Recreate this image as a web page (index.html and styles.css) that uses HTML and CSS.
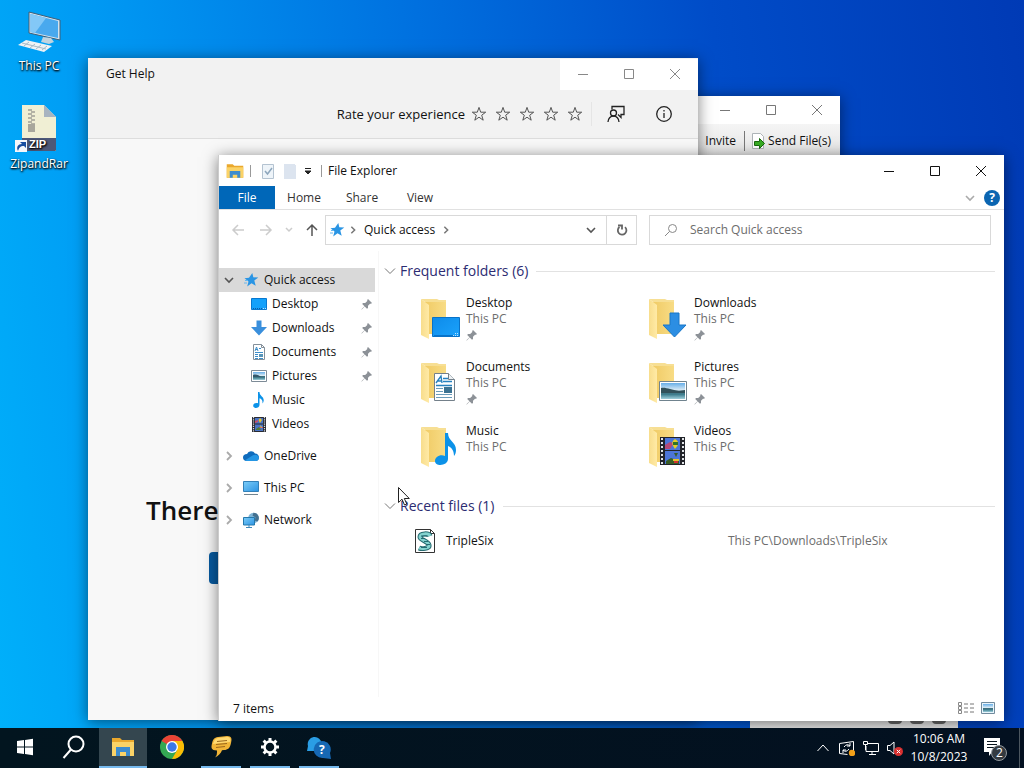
FILE: index.html
```
<!DOCTYPE html>
<html lang="en">
<head>
    <meta charset="UTF-8">
    <meta name="viewport" content="width=device-width, initial-scale=1.0">
    <title>File Explorer</title>
    <link rel="stylesheet" href="styles.css">
</head>
<body>
    <!-- shared icons -->
    <svg class="sprite" aria-hidden="true">
        <defs>
            <linearGradient id="gFolder" x1="0" y1="0" x2="1" y2="0">
                <stop offset="0" stop-color="#f0cb66"/><stop offset="1" stop-color="#f8dc85"/>
            </linearGradient>
            <linearGradient id="gFlap" x1="0" y1="0" x2="1" y2="0">
                <stop offset="0" stop-color="#f8dd8c"/><stop offset="1" stop-color="#ffeaa6"/>
            </linearGradient>
            <linearGradient id="gBlue" x1="0" y1="0" x2="1" y2="1">
                <stop offset="0" stop-color="#0d8bea"/><stop offset="1" stop-color="#1ba2fb"/>
            </linearGradient>
            <linearGradient id="gScreen" x1="0" y1="0" x2="1" y2="1">
                <stop offset="0" stop-color="#7ccdf8"/><stop offset="1" stop-color="#2c93e3"/>
            </linearGradient>
            <linearGradient id="gSky" x1="0" y1="0" x2="0" y2="1">
                <stop offset="0" stop-color="#66aee8"/><stop offset="0.45" stop-color="#dcecf5"/>
                <stop offset="0.5" stop-color="#3f6a78"/><stop offset="0.72" stop-color="#3f7f8f"/><stop offset="1" stop-color="#9fd0dc"/>
            </linearGradient>
        </defs>
        <symbol id="min" viewBox="0 0 12 12"><path d="M1 6.5h10" stroke="currentColor"/></symbol>
        <symbol id="max" viewBox="0 0 12 12"><path d="M1.5 1.5h9v9h-9z" fill="none" stroke="currentColor"/></symbol>
        <symbol id="close" viewBox="0 0 12 12"><path d="M1 1l10 10M11 1L1 11" stroke="currentColor"/></symbol>
        <symbol id="down" viewBox="0 0 12 12"><path d="M2 4l4 4 4-4" fill="none" stroke="currentColor" stroke-width="1.6"/></symbol>
        <symbol id="thin-down" viewBox="0 0 12 12"><path d="M1 3.500l5 5 5-5" fill="none" stroke="currentColor"/></symbol>
        <symbol id="right" viewBox="0 0 12 12"><path d="M4 2l4 4-4 4" fill="none" stroke="currentColor" stroke-width="1.8"/></symbol>
        <symbol id="star" viewBox="0 0 16 16"><path d="M8 1.4l1.7 4.8h5L10.7 9.200l1.500 5L8 11.200l-4.200 3 1.500-5L1.300 6.200h5z" fill="none" stroke="#555"/></symbol>
        <symbol id="quick" viewBox="0 0 16 16"><path d="M9.300 1l1 4.300 5 .2-4 3 1.400 5.300-4.200-2.600-4.300 3.300 1.300-5L1.500 6.300l4.500-.6z" fill="#2a95e4"/><path d="M2 8.500h3M1 11h3" stroke="#67b8f0"/></symbol>
        <symbol id="pin" viewBox="0 0 12 12"><path d="M7 1l4 4-1 .8-1-.1-2 2.100v2.200l-1 .8-2.300-2.300L.8 11.600.4 11.200 3.500 8.300 1.200 6l.8-1h2.200l2.100-2-.1-1z" fill="#8c9197"/></symbol>
        <symbol id="desktop" viewBox="0 0 16 16"><path d="M.5 2.500h15v11H.5z" fill="#13a1fb" stroke="#0878d0"/><path d="M2 12.500h9" stroke="#0a5ca8" stroke-dasharray="1 1"/><path d="M12 12.500h3" stroke="#bfe5ff" stroke-dasharray="1 1"/></symbol>
        <symbol id="download" viewBox="0 0 16 16"><path d="M5.500.5h5V7H16l-8 8.500L0 7h5.500z" fill="#3a8fdc"/></symbol>
        <symbol id="document" viewBox="0 0 16 16"><path d="M2.500.5h8l3 3v12h-11z" fill="#fff" stroke="#84909a"/><path d="M10.500.5v3h3" fill="none" stroke="#84909a"/><path d="M4 7l1.500-4L7 7M4.500 5.500h2M8 4.500h2M4 8.500h8M4 10.500h3M4 12.500h3M8 14.500h4M4 14.500h3" stroke="#3c8dc9" fill="none"/><path d="M8 10h4v3H8z" fill="#5794b8"/></symbol>
        <symbol id="picture" viewBox="0 0 16 16"><path d="M.5 2.500h15v11H.5z" fill="#fff" stroke="#7d8b97"/><path d="M2 4h12v8H2z" fill="url(#gSky)"/><path d="M2 7c3-1 6 0 8 2H2z" fill="#31576b"/></symbol>
        <symbol id="music" viewBox="0 0 16 16"><path d="M7 0h1.500c0 4 4.500 4.500 4.200 8.500-.1 1.500-.8 2.500-1.400 3 .7-2.500-.5-4.500-2.800-5.300V13c0 3.500-6.500 4-6.300.7C2.300 11.500 5 10.600 7 11.300z" fill="#0c92e8"/></symbol>
        <symbol id="video" viewBox="0 0 16 16"><path d="M1 1h14v15H1z" fill="#292b32"/><path d="M2.500 1v15M13.500 1v15" stroke="#d9dce0" stroke-width="1.200" stroke-dasharray="1.200 1"/><path d="M4 2h8v5.500H4zM4 8.500h8V15H4z" fill="#4974c5"/><path d="M9 2l2 2-2 3-1.500-3z" fill="#e4c332"/><path d="M4 5l3-1v2l-3 1zM8 11h4v1H8z" fill="#c84e68"/><path d="M5 13l3-2 2 3H5z" fill="#507c35"/><path d="M9 9l2 2-1 1z" fill="#f0d848"/></symbol>
        <symbol id="cloud" viewBox="0 0 16 16"><path d="M4 6a4.500 4.500 0 0 1 8-.5C14.500 5.500 16 7.500 16 9.500S14.500 13 13 13H3.500C1.500 13 0 11.500 0 9.500S1.500 6 4 6z" fill="#0f6cbd"/><path d="M2 12.300l8-5a4 4 0 0 1 6 2.500c0 2-1.500 3.200-3 3.200H3.500z" fill="#2596e4"/></symbol>
        <symbol id="pc" viewBox="0 0 16 16"><path d="M.5 1.500h15v10H.5z" fill="url(#gScreen)" stroke="#3280b8"/><path d="M1 14.500h14" stroke="#718490"/></symbol>
        <symbol id="network" viewBox="0 0 16 16"><circle cx="10.500" cy="6" r="5.300" fill="#7fb4d6"/><path d="M10.500.7a5.300 5.300 0 0 1 4 8.800l-3-1 1-3-3-2z" fill="#44708f"/><path d="M.5 5.500h11v7.500H.5z" fill="url(#gScreen)" stroke="#2478ac"/><path d="M6 13v2M3 15.500h6" stroke="#3f88b8"/></symbol>
        <symbol id="folder" viewBox="0 0 48 48"><path d="M7 5h21v34H7z" fill="url(#gFolder)"/><path d="M3 4l8 6v34l-8-4z" fill="url(#gFlap)"/><path d="M3 4h16l2 1h7v2H7z" fill="#f7df94"/><path d="M11 39h6v3l-6 1z" fill="#fff"/></symbol>
        <symbol id="explorer" viewBox="0 0 24 24"><path d="M1 3h8l2 2h12v16H1z" fill="#eaa82d"/><path d="M1 7h22v14H1z" fill="#fbd367"/><path d="M5 12h14v9h-4v-4H9v4H5z" fill="#3d8ccf"/></symbol>
    </svg>

    <main class="desktop">
        <div class="shortcuts">
            <a class="shortcut" href="#">
                <svg viewBox="0 0 48 44"><path d="M14 2l31 8v20l-31-7z" fill="#d4e3ee"/><path d="M15.500 4L43 11v17l-27.500-6z" fill="#49a9ee"/><path d="M15.500 4L31 8 20 23l-4.500-1z" fill="#83c8f7"/><path d="M14 2v21l31 7V10z" fill="none" stroke="#3e5e78"/><path d="M28 27l8 1 3 4-5 2-8-2z" fill="#c2d4df"/><path d="M11 30l26 6-8 6L3 35z" fill="#eef2f5"/><path d="M7 33l24 6M14 32l-5 4M20 34l-5 4M26 35l-5 4M32 36l-5 4" stroke="#a6bac7" fill="none"/></svg>
                <span>This PC</span>
            </a>
            <a class="shortcut" href="#">
                <svg viewBox="0 0 48 48"><path d="M7 1h22l12 12v34H7z" fill="#f0efd4"/><path d="M29 1l12 12H29z" fill="#a8b4c0"/><path d="M15 5v16M18 7v16" stroke="#b4b3a6" stroke-width="4" stroke-dasharray="2 2"/><path d="M13 20h7v8h-7z" fill="#a8a79c"/><path d="M7 34h34v12q0 1-1 1H7z" fill="#4d5878"/><text x="14" y="44" class="zip-text">ZIP</text><path d="M0 36h12v12H0z" fill="#f5f7fb"/><path d="M3 47c-2-4 0-7 4-7l-2-2h6v6l-2-2c-4 0-5 2-6 5z" fill="#174da0"/></svg>
                <span>ZipandRar</span>
            </a>
        </div>

        <section class="window chat-window">
            <div class="caption-buttons">
                <button aria-label="Minimize"><svg><use href="#min"/></svg></button>
                <button aria-label="Maximize"><svg><use href="#max"/></svg></button>
                <button aria-label="Close"><svg><use href="#close"/></svg></button>
            </div>
            <div class="chat-tools">
                <button>Invite</button>
                <button class="send"><svg viewBox="0 0 16 16"><path d="M2.500.5h8l3 3v12h-11z" fill="#fff" stroke="#adb3b7"/><path d="M4.500 8.500h5v-3l5 5-5 5v-3h-5z" fill="#38ac24" stroke="#17680d"/></svg>Send File(s)</button>
            </div>
        </section>
        <div class="chat-status"><i></i><i></i><i></i></div>

        <section class="window help-window">
            <header class="help-head">
                <div class="help-title">
                    <span>Get Help</span>
                    <div class="caption-buttons">
                        <button aria-label="Minimize"><svg><use href="#min"/></svg></button>
                        <button aria-label="Maximize"><svg><use href="#max"/></svg></button>
                        <button aria-label="Close"><svg><use href="#close"/></svg></button>
                    </div>
                </div>
                <div class="help-rate">
                    <span>Rate your experience</span>
                    <div class="stars">
                        <button aria-label="1 star"><svg><use href="#star"/></svg></button>
                        <button aria-label="2 stars"><svg><use href="#star"/></svg></button>
                        <button aria-label="3 stars"><svg><use href="#star"/></svg></button>
                        <button aria-label="4 stars"><svg><use href="#star"/></svg></button>
                        <button aria-label="5 stars"><svg><use href="#star"/></svg></button>
                    </div>
                    <button class="help-btn" aria-label="Feedback"><svg viewBox="0 0 18 18"><path d="M5 4.500v-3h12v8h-3v3l-3-3" /><circle cx="6.500" cy="8" r="3"/><path d="M1 17c0-3.500 2.500-6 5.500-6s5.500 2.500 5.500 6"/></svg></button>
                    <button class="help-btn" aria-label="About"><svg viewBox="0 0 18 18"><circle cx="9" cy="9" r="7.300"/><path d="M9 8v5M9 5v1.500"/></svg></button>
                </div>
            </header>
            <div class="help-body">
                <h1>There</h1>
                <button class="help-action" aria-label="Retry"></button>
            </div>
        </section>

        <section class="window explorer">
            <header class="titlebar">
                <svg class="app-icon"><use href="#explorer"/></svg>
                <i class="bar"></i>
                <button class="quick-btn" aria-label="Properties"><svg viewBox="0 0 16 16"><path d="M2.500 1.500h11v14h-11z" fill="#eef4f9" stroke="#b4c3d1"/><path d="M5 8l2.500 3L12 5" fill="none" stroke="#8da6bc" stroke-width="1.500"/></svg></button>
                <button class="quick-btn" aria-label="New folder"><svg viewBox="0 0 16 16"><path d="M2 1h11v1h1v14H2z" fill="#dce4ef"/></svg></button>
                <button class="customize" aria-label="Customize toolbar"><svg viewBox="0 0 8 8"><path d="M1 1.500h6M1 4l3 3 3-3z" fill="#222" stroke="#222"/></svg></button>
                <i class="bar"></i>
                <span class="window-name">File Explorer</span>
                <div class="caption-buttons">
                    <button aria-label="Minimize"><svg><use href="#min"/></svg></button>
                    <button aria-label="Maximize"><svg><use href="#max"/></svg></button>
                    <button aria-label="Close"><svg><use href="#close"/></svg></button>
                </div>
            </header>
            <nav class="ribbon">
                <button class="file">File</button>
                <button>Home</button>
                <button>Share</button>
                <button>View</button>
                <div class="ribbon-end">
                    <button aria-label="Expand ribbon"><svg><use href="#down"/></svg></button>
                    <button class="question" aria-label="Help">?</button>
                </div>
            </nav>
            <div class="address-row">
                <div class="history">
                    <button aria-label="Back"><svg viewBox="0 0 14 14"><path d="M13 7H2M7 2L2 7l5 5"/></svg></button>
                    <button aria-label="Forward"><svg viewBox="0 0 14 14"><path d="M1 7h11M7 2l5 5-5 5"/></svg></button>
                    <button class="recent" aria-label="Recent locations"><svg viewBox="0 0 8 8"><path d="M1 2l3 3 3-3"/></svg></button>
                    <button class="up" aria-label="Up"><svg viewBox="0 0 14 14"><path d="M7 13V2M2 7l5-5 5 5"/></svg></button>
                </div>
                <div class="address">
                    <svg class="i16"><use href="#quick"/></svg>
                    <svg class="sep"><use href="#right"/></svg>
                    <a href="#">Quick access</a>
                    <svg class="sep"><use href="#right"/></svg>
                    <button class="drop" aria-label="Previous locations"><svg><use href="#down"/></svg></button>
                    <button class="refresh" aria-label="Refresh"><svg viewBox="0 0 12 12"><path d="M3.500 3A4.300 4.300 0 1 0 9 3.200" fill="none" stroke="#666" stroke-width="1.800"/><path d="M2 1.500h4v4" fill="none" stroke="#666" stroke-width="1.800"/></svg></button>
                </div>
                <div class="search">
                    <svg viewBox="0 0 14 14"><circle cx="8.500" cy="5.500" r="4" fill="none" stroke="#888"/><path d="M5.500 8.500L1 13" stroke="#888"/></svg>
                    <input type="text" aria-label="Search" placeholder="Search Quick access">
                </div>
            </div>
            <div class="explorer-body">
                <ul class="tree">
                    <li class="selected"><svg class="arrow"><use href="#down"/></svg><a href="#"><svg class="i16"><use href="#quick"/></svg>Quick access</a></li>
                    <li class="child"><a href="#"><svg class="i16"><use href="#desktop"/></svg>Desktop</a><svg class="pin"><use href="#pin"/></svg></li>
                    <li class="child"><a href="#"><svg class="i16"><use href="#download"/></svg>Downloads</a><svg class="pin"><use href="#pin"/></svg></li>
                    <li class="child"><a href="#"><svg class="i16"><use href="#document"/></svg>Documents</a><svg class="pin"><use href="#pin"/></svg></li>
                    <li class="child"><a href="#"><svg class="i16"><use href="#picture"/></svg>Pictures</a><svg class="pin"><use href="#pin"/></svg></li>
                    <li class="child"><a href="#"><svg class="i16"><use href="#music"/></svg>Music</a></li>
                    <li class="child"><a href="#"><svg class="i16"><use href="#video"/></svg>Videos</a></li>
                    <li class="root"><svg class="arrow"><use href="#right"/></svg><a href="#"><svg class="i16"><use href="#cloud"/></svg>OneDrive</a></li>
                    <li class="root"><svg class="arrow"><use href="#right"/></svg><a href="#"><svg class="i16"><use href="#pc"/></svg>This PC</a></li>
                    <li class="root"><svg class="arrow"><use href="#right"/></svg><a href="#"><svg class="i16"><use href="#network"/></svg>Network</a></li>
                </ul>
                <div class="files">
                    <h2><svg><use href="#thin-down"/></svg>Frequent folders (6)</h2>
                    <div class="tiles">
                        <a class="tile" href="#">
                            <svg viewBox="0 0 48 48"><use href="#folder"/><path d="M14.500 22.500h27v19h-27z" fill="url(#gBlue)" stroke="#0872c8"/><path d="M16 40.500h20" stroke="#0872c8"/><path d="M35 40.500h6M37 38.500h4" stroke="#bce2ff" stroke-dasharray="1 1"/></svg>
                            <span><b>Desktop</b>This PC<svg class="pin"><use href="#pin"/></svg></span>
                        </a>
                        <a class="tile" href="#">
                            <svg viewBox="0 0 48 48"><use href="#folder"/><path d="M24 18h9v12h7L28.500 42 17 30h7z" fill="#2c8ee3" stroke="#1976c8"/></svg>
                            <span><b>Downloads</b>This PC<svg class="pin"><use href="#pin"/></svg></span>
                        </a>
                        <a class="tile" href="#">
                            <svg viewBox="0 0 48 48"><use href="#folder"/><path d="M16.500 14.500h14l6 6v21h-20z" fill="#fff" stroke="#74808a"/><path d="M30.500 14.500v6h6" fill="#edf1f4" stroke="#74808a"/><path d="M18 24l5-7 1 7M20 22h4M25 19.500h5M25 22.500h9M18 26.500h16" fill="none" stroke="#2781be" stroke-width="1.400"/><path d="M18 29.500h7M18 32.500h7M18 35.500h16M18 38.500h16" stroke="#6b9cbb"/><path d="M26 28h8v6h-8z" fill="#3b7292"/></svg>
                            <span><b>Documents</b>This PC<svg class="pin"><use href="#pin"/></svg></span>
                        </a>
                        <a class="tile" href="#">
                            <svg viewBox="0 0 48 48"><use href="#folder"/><path d="M13.500 22.500h27v19h-27z" fill="#fff" stroke="#70838e"/><path d="M15 24h24v16H15z" fill="url(#gSky)"/><path d="M15 29c5-1 10 2 18 3l6-1v3H15z" fill="#31515a"/></svg>
                            <span><b>Pictures</b>This PC<svg class="pin"><use href="#pin"/></svg></span>
                        </a>
                        <a class="tile" href="#">
                            <svg viewBox="0 0 48 48"><use href="#folder"/><path d="M27 10h3c0 8 8 9 8 17 0 3-1 5-2 6 0-6-3-9-6-10v13c0 7-13 8-13 2 0-4 5-7 10-5z" fill="#0c92e8"/></svg>
                            <span><b>Music</b>This PC</span>
                        </a>
                        <a class="tile" href="#">
                            <svg viewBox="0 0 48 48"><use href="#folder"/><path d="M14 14h25v28H14z" fill="#22242a"/><path d="M16 15v27M37 15v27" stroke="#e2e5e8" stroke-width="2" stroke-dasharray="2 2"/><path d="M19 15h15v12H19zM19 28h15v13H19z" fill="#4c75d8"/><path d="M19 22l5-3 4 1-4 6h-5z" fill="#b54978"/><path d="M29 16c6 3 2 8 0 10-2-3-5-7 0-10z" fill="#e4ce29"/><path d="M27 19h5v3h-5z" fill="#2e7427"/><path d="M28 30h4l-2 4zM20 38l5-3 8 3v3H20z" fill="#385c25"/><path d="M27 36h6v2h-6z" fill="#e1c02d"/><path d="M28 38h4v2h-4z" fill="#d23131"/></svg>
                            <span><b>Videos</b>This PC</span>
                        </a>
                    </div>
                    <h2><svg><use href="#thin-down"/></svg>Recent files (1)</h2>
                    <a class="recent-file" href="#">
                        <svg viewBox="0 0 22 24"><path d="M1.500.5h15l4 4v19h-19z" fill="#fff" stroke="#333"/><path d="M16.500.5v4h4" fill="none" stroke="#333"/><path d="M16 7c-1-3-10-3-10 1 0 3 8 4 9 8 1 4-8 4-10 3" fill="none" stroke="#276c72" stroke-width="5"/><path d="M16 7c-1-3-10-3-10 1 0 3 8 4 9 8 1 4-8 4-10 3" fill="none" stroke="#83d2cf" stroke-width="3"/><path d="M7 7h6M7 9.500h4M10 12.500h4M12 15.500h4M7 18.500h6" stroke="#246a73"/></svg>
                        <span>TripleSix</span>
                        <small>This PC\Downloads\TripleSix</small>
                    </a>
                </div>
            </div>
            <footer class="statusbar">
                <span>7 items</span>
                <div>
                    <button aria-label="Details view"><svg viewBox="0 0 16 12"><path d="M.5.5h3v3h-3zM.5 4.500h3v3h-3zM.5 8.500h3v3h-3z" fill="none" stroke="#888"/><path d="M6 2h10M6 6h10M6 10h10" stroke="#777" stroke-dasharray="4 2"/></svg></button>
                    <button aria-label="Large icons view"><svg viewBox="0 0 14 12"><path d="M.5.5h13v11H.5z" fill="#e9f5fc" stroke="#718b9d"/><path d="M2 2h10v8H2z" fill="url(#gSky)"/></svg></button>
                </div>
            </footer>
        </section>

        <svg class="cursor" viewBox="0 0 12 19"><path d="M.5.5v15l3.500-3.300 2.500 5.800 2.300-1-2.500-5.500h5z" fill="#fff" stroke="#222"/></svg>
    </main>

    <footer class="taskbar">
        <div class="apps">
            <button aria-label="Start"><svg viewBox="0 0 24 24"><path d="M4 6l7-1v6.500H4zM12 4.900l8-1.100v7.700h-8zM4 12.500h7V19l-7-1zM12 12.500h8v7.700l-8-1.100z" fill="#fff"/></svg></button>
            <button aria-label="Search"><svg viewBox="0 0 24 24"><circle cx="14" cy="9" r="7.500" fill="none" stroke="#fff" stroke-width="2"/><path d="M9 14.500L1.500 23" stroke="#fff" stroke-width="2"/></svg></button>
            <button class="open active" aria-label="File Explorer"><svg><use href="#explorer"/></svg></button>
            <button aria-label="Chrome"><svg viewBox="0 0 24 24"><circle cx="12" cy="12" r="12" fill="#34a853"/><path d="M12 12L1.600 6A12 12 0 0 1 22.400 6z" fill="#ea4335"/><path d="M22.400 6A12 12 0 0 1 12 24l5.200-9L12 6z" fill="#fbbc05"/><circle cx="12" cy="12" r="6" fill="#fff"/><circle cx="12" cy="12" r="4.700" fill="#3b78e7"/></svg></button>
            <button class="open" aria-label="Chat"><svg viewBox="0 0 24 24"><path d="M9 2l9-1c5 0 5 3 4 7-1 5-3 7-7 7l-2 .2c-1 3-4 6-7 7.300 2-2 2-4 2-7-6 0-6-3-5-7 1-4 2-6 6-6.500z" fill="#f0b437"/><path d="M9 3l9-1c3 0 4 2 3 5L4 9c1-3 2-5.500 5-6z" fill="#ffda72"/><path d="M8 6.500l10-1M7 9.500l11-1M7 12.500l9-1" stroke="#9b681c" stroke-width="1.200"/></svg></button>
            <button class="open" aria-label="Settings"><svg viewBox="0 0 24 24"><circle cx="12" cy="12" r="5.500" fill="none" stroke="#fff" stroke-width="2.500"/><path d="M12 3v3M12 18v3M3 12h3M18 12h3M5.600 5.600l2.200 2.200M16.200 16.200l2.200 2.200M5.600 18.400l2.200-2.200M16.200 7.800l2.200-2.200" stroke="#fff" stroke-width="3"/></svg></button>
            <button class="open" aria-label="Get Help"><svg viewBox="0 0 24 24"><path d="M0 16l1-5a7 7 0 1 1 6 5z" fill="#2a9de4"/><path d="M24 24l-8-1a8.500 8.500 0 1 1 7-5z" fill="#1668b4"/><text x="12" y="19" class="q-text">?</text></svg></button>
        </div>
        <div class="tray">
            <button aria-label="Hidden icons"><svg viewBox="0 0 16 16"><path d="M2.500 11L8 5l5.500 6"/></svg></button>
            <button aria-label="Update"><svg viewBox="0 0 16 16"><path d="M.5 3.500l14-2v11M.5 3.500v10l8 1M5 7q3-4 6-1M11 3v3H8M10 9q-3 4-6 1M4 13v-3h3"/><circle cx="13" cy="13" r="3.200" fill="#f3a019" stroke="none"/></svg></button>
            <button aria-label="Network"><svg viewBox="0 0 16 16"><path d="M4 3.500h11.500v8H3V6M.5 1.500h4v3h-4zM2.500 5v5M9 12v3M6 14.500h7"/></svg></button>
            <button aria-label="Sound muted"><svg viewBox="0 0 16 16"><path d="M.5 5.500H3L7 2v12l-4-3.500H.5z"/><circle cx="11.500" cy="11.500" r="4.500" fill="#d92f2f" stroke="none"/><path d="M9.800 9.800l3.400 3.400M13.200 9.800l-3.400 3.400"/></svg></button>
            <button class="clock"><span>10:06 AM</span><span>10/8/2023</span></button>
            <button class="notify" aria-label="Notifications"><svg viewBox="0 0 26 26"><path d="M2 3h16v14h-8l-3 4v-4H2z" fill="#fff" stroke="none"/><path d="M5 6.500h10M5 9.500h10M5 12.500h7" stroke="#08141d"/><circle cx="17" cy="18" r="7.500" fill="#343a40" stroke="#92989d"/><text x="14" y="22">2</text></svg></button>
            <i class="show-desktop"></i>
        </div>
    </footer>
</body>
</html>
```
FILE: styles.css
```
* {
    box-sizing: border-box;
}
body {
    margin: 0;
    height: 100vh;
    display: flex;
    flex-direction: column;
    overflow: hidden;
    font: 12px/16px "Open Sans", "Noto Sans", sans-serif;
    color: #111;
}
button {
    display: flex;
    align-items: center;
    justify-content: center;
    padding: 0;
    border: 0;
    background: none;
    color: inherit;
    font: inherit;
}
a {
    color: inherit;
    text-decoration: none;
}
svg {
    display: block;
    flex: none;
}
.sprite {
    position: absolute;
    width: 0;
    height: 0;
}
.i16 {
    width: 16px;
    height: 16px;
}
.pin {
    width: 12px;
    height: 12px;
}

/* desktop */
.desktop {
    position: relative;
    flex: 1;
    overflow: hidden;
    background: linear-gradient(82deg, #00b0fa 0%, #009bf4 16%, #0070df 46%, #004cc8 72%, #003ab5 100%);
}
.shortcuts {
    display: flex;
    flex-direction: column;
    gap: 30px;
    width: 78px;
    padding-top: 10px;
}
.shortcut {
    display: flex;
    flex-direction: column;
    align-items: center;
    gap: 4px;
    color: #fff;
    text-shadow: 1px 1px 2px #000, 0 1px 2px #000;
}
.shortcut svg {
    width: 48px;
    height: 44px;
}
.shortcut + .shortcut svg {
    height: 48px;
}
.zip-text {
    fill: #fff;
    font: bold 11px "Liberation Sans", sans-serif;
}
.window {
    position: absolute;
    background: #fff;
    box-shadow: 0 2px 14px rgba(0, 0, 0, 0.5);
}
.caption-buttons {
    display: flex;
    margin-left: auto;
}
.caption-buttons button {
    width: 46px;
    height: 31px;
}
.caption-buttons svg {
    width: 12px;
    height: 12px;
}

/* chat window behind the others */
.chat-window {
    left: 640px;
    top: 96px;
    width: 200px;
    height: 80px;
    color: #777;
}
.chat-window .caption-buttons {
    justify-content: flex-end;
}
.chat-window .caption-buttons button {
    height: 28px;
}
.chat-tools {
    display: flex;
    justify-content: flex-end;
    height: 52px;
    padding: 7px 9px 0 0;
    background: linear-gradient(#f5f5f5, #d9d9d9);
    color: #111;
}
.chat-tools button {
    height: 20px;
}
.chat-tools .send {
    gap: 2px;
    margin-left: 8px;
    padding-left: 5px;
    border-left: 1px solid #777;
}
.send svg {
    width: 16px;
    height: 16px;
}
.chat-status {
    position: absolute;
    left: 750px;
    bottom: 0;
    width: 208px;
    height: 8px;
    display: flex;
    justify-content: flex-end;
    gap: 8px;
    padding-right: 12px;
    background: #e5e5e5;
}
.chat-status i {
    width: 14px;
    height: 4px;
    border-radius: 0 0 6px 6px;
    background: #666;
}

/* get help */
.help-window {
    left: 88px;
    top: 58px;
    bottom: 8px;
    width: 610px;
    display: flex;
    flex-direction: column;
    background: #f8f8f8;
}
.help-head {
    height: 81px;
    background: #f2f2f2;
    border-bottom: 1px solid #ddd;
}
.help-title {
    display: flex;
    align-items: center;
    height: 32px;
    padding-left: 18px;
}
.help-title .caption-buttons {
    background: #fff;
    color: #888;
}
.help-rate {
    display: flex;
    align-items: center;
    justify-content: flex-end;
    height: 48px;
    padding-right: 10px;
    font-size: 13px;
}
.stars {
    display: flex;
    gap: 8px;
    margin-left: 6px;
    padding-right: 8px;
    border-right: 1px solid #e5e5e5;
}
.stars svg {
    width: 16px;
    height: 24px;
}
.help-btn {
    width: 48px;
}
.help-btn svg {
    width: 18px;
    height: 18px;
    fill: none;
    stroke: #222;
    stroke-width: 1.3;
}
.help-body {
    padding: 353px 0 0 58px;
}
.help-body h1 {
    margin: 0 0 24px;
    font-size: 26px;
    font-weight: 600;
    line-height: 36px;
}
.help-action {
    width: 240px;
    height: 32px;
    margin-left: 63px;
    border-radius: 4px;
    background: #075a9f;
}

/* explorer */
.explorer {
    left: 218px;
    top: 155px;
    right: 20px;
    bottom: 7px;
    display: flex;
    flex-direction: column;
    border-left: 1px solid #ccc;
}
.titlebar {
    display: flex;
    align-items: center;
    height: 31px;
    padding-left: 7px;
}
.app-icon {
    width: 18px;
    height: 18px;
}
.bar {
    width: 1px;
    height: 12px;
    margin: 0 6px;
    background: #999;
}
.quick-btn {
    width: 22px;
}
.quick-btn svg {
    width: 16px;
    height: 16px;
}
.customize {
    width: 14px;
}
.customize svg {
    width: 8px;
    height: 8px;
}
.ribbon {
    display: flex;
    height: 24px;
    border-bottom: 1px solid #e1e1e1;
}
.ribbon > button {
    min-width: 58px;
    color: #333;
}
.ribbon .file {
    min-width: 56px;
    background: #0067b8;
    color: #fff;
}
.ribbon-end {
    display: flex;
    align-items: center;
    gap: 8px;
    margin-left: auto;
    padding-right: 4px;
    color: #aaa;
}
.ribbon-end svg {
    width: 12px;
    height: 12px;
}
.ribbon-end .question {
    width: 16px;
    height: 16px;
    border-radius: 50%;
    background: #0b65b1;
    color: #fff;
    font-weight: bold;
}
.address-row {
    display: flex;
    height: 41px;
    padding: 5px 13px 6px 9px;
}
.history {
    display: flex;
    align-items: center;
    flex: none;
    width: 97px;
    gap: 8px;
}
.history button {
    width: 20px;
}
.history .recent {
    width: 10px;
}
.history svg {
    width: 14px;
    height: 14px;
    fill: none;
    stroke: #ccc;
    stroke-width: 1.5;
}
.history .recent svg {
    width: 8px;
    height: 8px;
}
.history .up svg {
    stroke: #555;
}
.address {
    display: flex;
    align-items: center;
    flex: 1 1 312px;
    padding-left: 3px;
    border: 1px solid #d9d9d9;
}
.address .sep {
    width: 10px;
    height: 10px;
    margin: 0 6px 0 3px;
    color: #777;
}
.address a + .sep {
    margin-left: 6px;
}
.drop {
    width: 30px;
    margin-left: auto;
    color: #555;
}
.drop svg {
    width: 12px;
    height: 12px;
}
.refresh {
    align-self: stretch;
    width: 30px;
    border-left: 1px solid #d9d9d9;
}
.refresh svg {
    width: 12px;
    height: 12px;
}
.search {
    display: flex;
    align-items: center;
    flex: 1 1 342px;
    margin-left: 12px;
    padding-left: 14px;
    border: 1px solid #d9d9d9;
}
.search svg {
    width: 14px;
    height: 14px;
}
.search input {
    flex: 1;
    min-width: 0;
    padding: 0 0 0 12px;
    border: 0;
    outline: 0;
    background: none;
    font: inherit;
}
.search input::placeholder {
    color: #6d6d6d;
}
.explorer-body {
    display: flex;
    flex: 1;
    min-height: 0;
}
.tree {
    width: 160px;
    margin: 0;
    padding: 17px 3px 0 0;
    border-right: 1px solid #f7f7f7;
    list-style: none;
}
.tree li {
    display: flex;
    align-items: center;
    height: 24px;
    padding: 0 2px 0 4px;
}
.tree .selected {
    background: #d9d9d9;
}
.tree a {
    display: flex;
    align-items: center;
    gap: 5px;
}
.tree .child {
    padding-left: 32px;
}
.tree .root {
    margin-top: 8px;
}
.tree .pin {
    margin-left: auto;
}
.arrow {
    width: 12px;
    height: 12px;
    margin-right: 8px;
    color: #555;
}
.root .arrow {
    color: #aaa;
}
.files {
    flex: 1;
    padding: 10px 9px 0 5px;
}
.files h2 {
    display: flex;
    align-items: center;
    gap: 4px;
    margin: 0;
    color: #2c2c72;
    font-size: 14px;
    font-weight: 400;
    line-height: 20px;
}
.files h2::after {
    content: "";
    flex: 1;
    height: 1px;
    margin-left: 4px;
    background: #e2e2e2;
}
.files h2 svg {
    width: 12px;
    height: 12px;
    color: #777;
}
.tiles {
    display: grid;
    grid-template-columns: 228px 228px;
    grid-auto-rows: 64px;
    padding: 14px 0 9px 34px;
}
.tile {
    display: flex;
    color: #6d6d6d;
}
.tile > svg {
    width: 48px;
    height: 48px;
}
.tile b {
    display: block;
    color: #111;
    font-weight: 400;
}
.tile .pin {
    margin-top: 2px;
}
.recent-file {
    display: flex;
    align-items: center;
    height: 50px;
    padding-left: 29px;
}
.recent-file svg {
    width: 24px;
    height: 24px;
    margin-right: 9px;
}
.recent-file span {
    width: 282px;
}
.recent-file small {
    color: #6d6d6d;
    font-size: 12px;
}
.statusbar {
    display: flex;
    align-items: center;
    justify-content: space-between;
    height: 24px;
    padding: 0 8px 0 14px;
}
.statusbar div {
    display: flex;
    gap: 6px;
    padding-bottom: 3px;
}
.statusbar svg {
    width: 16px;
    height: 12px;
}
.cursor {
    position: absolute;
    left: 398px;
    top: 487px;
    width: 12px;
    height: 19px;
}

/* taskbar */
.taskbar {
    display: flex;
    justify-content: space-between;
    height: 40px;
    background: linear-gradient(90deg, #02151f, #031020);
    color: #fff;
}
.apps {
    display: flex;
    gap: 1px;
    padding-left: 1px;
}
.apps button {
    width: 48px;
    padding-bottom: 1px;
    border-bottom: 2px solid transparent;
}
.apps svg {
    width: 24px;
    height: 24px;
}
.apps .open {
    width: 40px;
    margin: 0 4px;
    border-color: #76b9ed;
}
.apps .active {
    width: 48px;
    margin: 0;
    background: #34464f;
}
.q-text {
    fill: #fff;
    font: bold 12px "Open Sans", sans-serif;
}
.tray {
    display: flex;
    align-items: center;
}
.tray button {
    width: 24px;
}
.tray svg {
    width: 16px;
    height: 16px;
    fill: none;
    stroke: #fff;
}
.tray .clock {
    flex-direction: column;
    width: 64px;
    line-height: 18px;
}
.tray .notify {
    width: 48px;
}
.notify svg {
    width: 26px;
    height: 26px;
}
.notify text {
    fill: #fff;
    stroke: none;
    font: 12px "Open Sans", sans-serif;
}
.show-desktop {
    width: 5px;
    height: 40px;
    border-left: 1px solid #4c565f;
}
```
